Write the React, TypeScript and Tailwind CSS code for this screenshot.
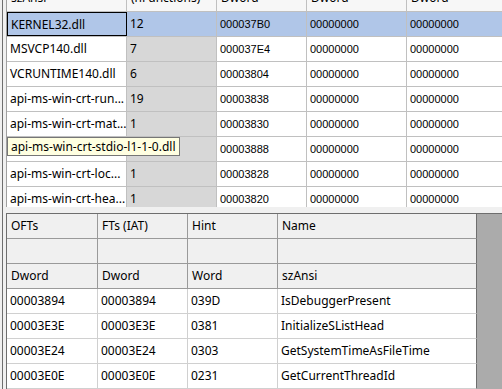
import * as React from "react";

const seg = "font-['Noto_Sans','Open_Sans',sans-serif] text-[12px]";
const tah = "font-['Liberation_Sans',Arial,sans-serif] text-[11px]";

type TopRow = { name: string; count: string; rva: string };

const topRows: TopRow[] = [
  { name: "KERNEL32.dll", count: "12", rva: "000037B0" },
  { name: "MSVCP140.dll", count: "7", rva: "000037E4" },
  { name: "VCRUNTIME140.dll", count: "6", rva: "00003804" },
  { name: "api-ms-win-crt-run...", count: "19", rva: "00003838" },
  { name: "api-ms-win-crt-mat...", count: "1", rva: "00003830" },
  { name: "api-ms-win-crt-stdi...", count: "1", rva: "00003888" },
  { name: "api-ms-win-crt-loc...", count: "1", rva: "00003828" },
  { name: "api-ms-win-crt-hea...", count: "1", rva: "00003820" },
];

const bottomRows = [
  ["00003894", "00003894", "039D", "IsDebuggerPresent"],
  ["00003E3E", "00003E3E", "0381", "InitializeSListHead"],
  ["00003E24", "00003E24", "0303", "GetSystemTimeAsFileTime"],
  ["00003E0E", "00003E0E", "0231", "GetCurrentThreadId"],
];

const TopTable: React.FC = () => {
  return (
    <div className="h-[208px] overflow-hidden border-l border-[#a0a0a0] bg-white">
      {/* header, mostly scrolled out of view */}
      <div className={`-mt-[13px] flex h-[25px] border-b border-[#c0c0c0] bg-[#f7f7f7] text-black ${seg}`}>
        <div className="w-[120px] border-r border-[#c0c0c0] pl-[4px] leading-[22px]">szAnsi</div>
        <div className="w-[90px] border-r border-[#c0c0c0] pl-[4px] leading-[22px]">(nFunctions)</div>
        <div className="w-[90px] border-r border-[#c0c0c0] pl-[4px] leading-[22px]">Dword</div>
        <div className="w-[100px] border-r border-[#c0c0c0] pl-[4px] leading-[22px]">Dword</div>
        <div className="flex-1 pl-[4px] leading-[22px]">Dword</div>
      </div>

      {topRows.map((r, i) => {
        const sel = i === 0;
        return (
          <div
            key={r.name}
            className={`flex h-[25px] border-b border-[#c0c0c0] text-black ${sel ? "bg-[#b0c6e8]" : ""}`}
          >
            <div
              className={`w-[120px] overflow-hidden whitespace-nowrap border-r border-[#c0c0c0] ${seg} ${sel ? "border border-black" : ""}`}
            >
              <div className="pl-[3px] leading-[24px]">{r.name}</div>
            </div>
            <div
              className={`w-[90px] border-r border-[#c0c0c0] pl-[3px] leading-[24px] ${seg} ${sel ? "" : "bg-[#d7d7d7]"}`}
            >
              {r.count}
            </div>
            <div className={`w-[90px] border-r border-[#c0c0c0] pl-[3px] leading-[24px] ${tah}`}>{r.rva}</div>
            <div className={`w-[100px] border-r border-[#c0c0c0] pl-[3px] leading-[24px] ${tah}`}>00000000</div>
            <div className={`flex-1 pl-[3px] leading-[24px] ${tah}`}>00000000</div>
          </div>
        );
      })}
    </div>
  );
};

const BottomTable: React.FC = () => {
  const headCell = "border-r border-b border-[#9a9a9a] pl-[4px] leading-[24px]";
  const cell = "border-r border-b border-[#d0d0d0] pl-[3px] leading-[24px]";
  const widths = ["w-[91px]", "w-[90px]", "w-[90px]", "w-[199px]"];
  return (
    <div className="flex flex-1 border-t border-[#6e6e6e]">
      <div className={`w-[471px] border-l border-[#6e6e6e] text-black ${seg}`}>
        {[
          ["OFTs", "FTs (IAT)", "Hint", "Name"],
          ["", "", "", ""],
          ["Dword", "Dword", "Word", "szAnsi"],
        ].map((row, ri) => (
          <div key={ri} className="flex h-[25px] bg-[#f0f0f0]">
            {row.map((t, ci) => (
              <div
                key={ci}
                className={`${widths[ci]} ${headCell} ${ci === 3 ? "border-r-[#6e6e6e]" : ""}`}
              >
                {t}
              </div>
            ))}
          </div>
        ))}
        {bottomRows.map((row, ri) => (
          <div key={ri} className="flex h-[25px] bg-white">
            {row.map((t, ci) => (
              <div
                key={ci}
                className={`${widths[ci]} ${cell} ${ci === 3 ? "border-r-[#6e6e6e]" : ""}`}
              >
                {t}
              </div>
            ))}
          </div>
        ))}
      </div>
      <div className="flex-1 bg-[#ababab]" />
    </div>
  );
};

export default function App() {
  return (
    <div className="relative flex h-[389px] w-[502px] overflow-hidden bg-[#f0f0f0]">
      {/* window edge */}
      <div className="w-[2px]" />
      <div className="w-[1px] bg-[#6e6e6e]" />
      <div className="w-[3px]" />

      <div className="flex flex-1 flex-col">
        <TopTable />
        {/* splitter */}
        <div className="h-[6px] bg-[#f0f0f0]" />
        <BottomTable />
      </div>

      {/* tooltip over the stdio row */}
      <div
        className={`absolute left-[7px] top-[137px] h-[19px] whitespace-nowrap border border-[#767676] bg-[#ffffe1] px-[3px] leading-[17px] text-black ${seg}`}
      >
        api-ms-win-crt-stdio-l1-1-0.dll
      </div>
    </div>
  );
}
